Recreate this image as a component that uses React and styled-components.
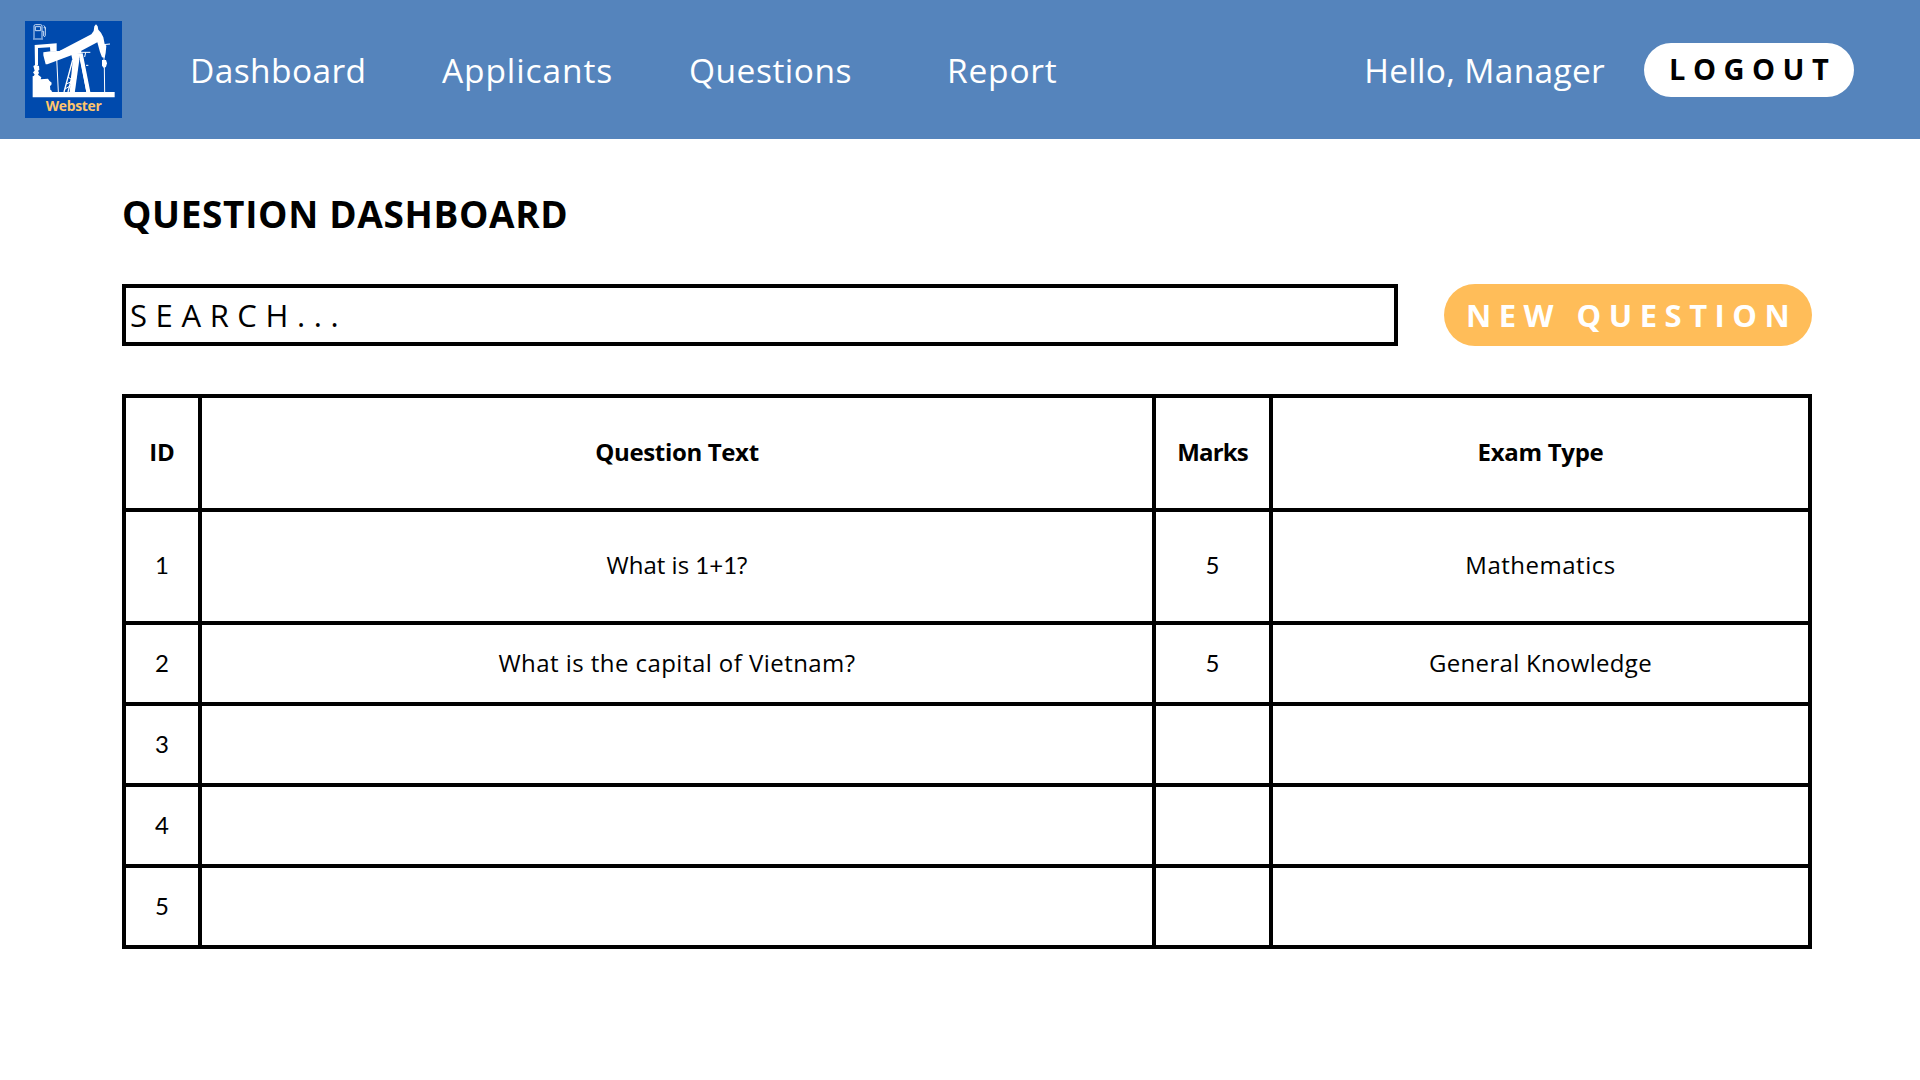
import React from "react";
import styled, { createGlobalStyle } from "styled-components";

const GlobalStyle = createGlobalStyle`
  *, *::before, *::after { box-sizing: border-box; }
  body {
    margin: 0;
    background: #fff;
    color: #000;
    font-family: "Open Sans", "Noto Sans", sans-serif;
  }
`;

const Page = styled.div`
  width: 1920px;
  height: 1080px;
  overflow: hidden;
`;

const Header = styled.header`
  display: flex;
  align-items: center;
  height: 139px;
  padding: 0 66px 0 25px;
  background: #5584bc;
  color: #fff;
`;

const Logo = styled.svg`
  display: block;
  flex: none;
  width: 97px;
  height: 97px;
`;

const LogoName = styled.text`
  font-family: "Open Sans", sans-serif;
  font-size: 41.5px;
  font-weight: 700;
  fill: #ffc56b;
`;

const Nav = styled.nav`
  display: grid;
  grid-template-columns: 252px 247px 258px auto;
  margin-left: 68px;
`;

const HeaderText = styled.span`
  font-size: 33.5px;
  font-weight: 400;
  line-height: 48px;
  letter-spacing: ${(p) => p.$spacing}px;
  white-space: nowrap;
`;

const Account = styled.div`
  display: flex;
  align-items: center;
  gap: 39px;
  margin-left: auto;
`;

const Pill = styled.button`
  display: flex;
  align-items: center;
  border: 0;
  border-radius: 999px;
  font-family: inherit;
  font-weight: 700;
  white-space: nowrap;
`;

const LogoutButton = styled(Pill)`
  width: 210px;
  height: 54px;
  padding: 0 0 2px 25px;
  background: #fff;
  color: #000;
  font-size: 29px;
  letter-spacing: 7.5px;
`;

const NewButton = styled(Pill)`
  width: 368px;
  height: 62px;
  padding: 0 0 0 22px;
  background: #ffbd59;
  color: #fff;
  font-size: 31px;
  letter-spacing: 7.5px;
`;

const Main = styled.main`
  padding: 50px 108px 0 122px;
`;

const Title = styled.h1`
  margin: 0;
  font-size: 37px;
  font-weight: 700;
  line-height: 50px;
  letter-spacing: 0.65px;
`;

const Tools = styled.div`
  display: flex;
  justify-content: space-between;
  margin-top: 45px;
`;

const Search = styled.div`
  display: flex;
  align-items: center;
  width: 1276px;
  height: 62px;
  padding-left: 4px;
  border: 4px solid #000;
  font-size: 31px;
  letter-spacing: 8.6px;
`;

const Table = styled.div`
  display: grid;
  grid-template-columns: 72px 950px 113px 1fr;
  grid-template-rows: 110px 109px repeat(4, 77px);
  gap: 4px;
  margin-top: 48px;
  padding: 4px;
  background: #000;
`;

const Cell = styled.div`
  display: flex;
  align-items: center;
  justify-content: center;
  padding-bottom: ${(p) => p.$lift || 3}px;
  background: #fff;
  font-size: 24px;
  font-weight: ${(p) => (p.$head ? 700 : 400)};
  letter-spacing: ${(p) => p.$spacing || 0}px;
  white-space: pre;
`;

const Digits = styled.span`
  font-family: Lato, "Open Sans", sans-serif;
`;

const links = [
  ["Dashboard", 0.4],
  ["Applicants", 0.9],
  ["Questions", 0.5],
  ["Report", 0.8],
];

const headings = [
  ["ID", 0],
  ["Question Text", -0.35],
  ["Marks", -0.9],
  ["Exam Type", -0.3],
];

const rows = [
  { id: 1, text: <>What is <Digits>1+1</Digits>?</>, marks: 5, exam: "Mathematics", examSpacing: 0.5, lift: 4 },
  { id: 2, text: "What is the capital of Vietnam?", textSpacing: 0.45, marks: 5, exam: "General Knowledge", examSpacing: 0.3 },
  { id: 3 },
  { id: 4 },
  { id: 5 },
];

function WebsterLogo() {
  return (
    <Logo viewBox="15 15 291 291">
      <rect x="15" y="15" width="291" height="291" fill="#004aad" />
      <g fill="none" stroke="#c9dcf5" strokeWidth="3">
        <path d="M42 67V30q0-4 4-4h16q4 0 4 4v37M39 69h30M46 32h16v12H46zM67 46h4v14q4 4 5-1V34l-5-6M71 35h5v6" />
      </g>
      <g fill="#fff">
        <path d="M70 109L93 106L118 105L214 55L221 45L223 31L228 25L233 31L235 41L243 50L250 64L254 84L259 89L257 111L254 125L246 124L240 108L232 79L184 104L183 112L158 116L82 145L77 145L70 118Z" />
        <path d="M44 87L110 82V106L91 107L90 94L54 96V147L45 149Z" />
        <path d="M40 150L47 146L57 150L58 162L54 164L57 170L54 176L64 184L62 190L84 188L88 194L95 200L94 207L90 210L91 221L97 226L94 228H284V244H38V184L44 176L39 169L44 164Z" />
        <path d="M153 112H188L211 228H199L178 121L163 228H149L158 135Z" />
        <path d="M246 132H258L261 142L258 152L252 157L246 149Z" />
      </g>
      <path d="M178 124L197 228H164Z" fill="#004aad" />
      <g fill="none" stroke="#fff">
        <path d="M158 132L132 228M166 145L144 228" strokeWidth="4" />
        <path d="M175 128L161 228" strokeWidth="7" />
        <path d="M183 122L204 228" strokeWidth="10" />
        <path d="M139 204L160 194M144 183L160 194M135 219L157 206" strokeWidth="3" />
        <path d="M109 105L115 228M122 104V110M252 119V134M253 155L254 228M249 86L270 84M183 109H211M197 109L194 123M198 148H205M38 182H50" strokeWidth="3" />
      </g>
      <LogoName x="77" y="285" textLength="168">Webster</LogoName>
    </Logo>
  );
}

export default function App() {
  return (
    <Page>
      <GlobalStyle />
      <Header>
        <WebsterLogo />
        <Nav>
          {links.map(([label, spacing]) => (
            <HeaderText key={label} $spacing={spacing}>{label}</HeaderText>
          ))}
        </Nav>
        <Account>
          <HeaderText $spacing={0.3}>Hello, Manager</HeaderText>
          <LogoutButton>LOGOUT</LogoutButton>
        </Account>
      </Header>
      <Main>
        <Title>QUESTION DASHBOARD</Title>
        <Tools>
          <Search>SEARCH...</Search>
          <NewButton>NEW QUESTION</NewButton>
        </Tools>
        <Table>
          {headings.map(([label, spacing]) => (
            <Cell key={label} $head $spacing={spacing} $lift={4}>{label}</Cell>
          ))}
          {rows.map((r) => (
            <React.Fragment key={r.id}>
              <Cell $lift={r.lift}><Digits>{r.id}</Digits></Cell>
              <Cell $lift={r.lift} $spacing={r.textSpacing}>{r.text}</Cell>
              <Cell $lift={r.lift}><Digits>{r.marks}</Digits></Cell>
              <Cell $lift={r.lift} $spacing={r.examSpacing}>{r.exam}</Cell>
            </React.Fragment>
          ))}
        </Table>
      </Main>
    </Page>
  );
}
